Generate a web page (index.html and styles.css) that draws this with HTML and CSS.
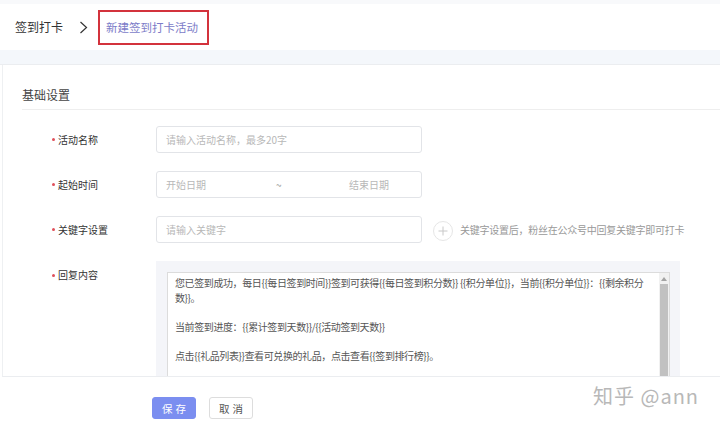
FILE: index.html
```html
<!DOCTYPE html>
<html lang="zh">
<head>
<meta charset="utf-8">
<link rel="stylesheet" href="styles.css">
</head>
<body>
<div class="page">
  <header class="header">
    <span class="crumb">签到打卡</span>
    <svg class="chev" width="9" height="13" viewBox="0 0 9 13"><path d="M1.5 1 L7.5 6.5 L1.5 12" fill="none" stroke="#333" stroke-width="1.2"/></svg>
    <span class="crumb-box"><span class="crumb-cur">新建签到打卡活动</span></span>
  </header>
  <div class="band"></div>
  <main class="card">
    <h2 class="section-title">基础设置</h2>
    <div class="form">
      <div class="row">
        <label class="label"><span class="req"></span>活动名称</label>
        <div class="input"><span class="ph">请输入活动名称，最多20字</span></div>
      </div>
      <div class="row">
        <label class="label"><span class="req"></span>起始时间</label>
        <div class="input date">
          <span class="ph d1">开始日期</span>
          <span class="ph tilde">~</span>
          <span class="ph d2">结束日期</span>
        </div>
      </div>
      <div class="row">
        <label class="label"><span class="req"></span>关键字设置</label>
        <div class="input"><span class="ph">请输入关键字</span></div>
        <span class="plus"><svg width="10" height="10" viewBox="0 0 10 10"><path d="M5 0.5V9.5M0.5 5H9.5" stroke="#c8c8c8" stroke-width="1"/></svg></span>
        <span class="help">关键字设置后，粉丝在公众号中回复关键字即可打卡</span>
      </div>
      <div class="row row-top">
        <label class="label"><span class="req"></span>回复内容</label>
        <div class="ta-outer">
          <div class="ta">
            <div class="ta-text">
              <p>您已签到成功，每日{{每日签到时间}}签到可获得{{每日签到积分数}} {{积分单位}}，当前{{积分单位}}：{{剩余积分数}}。</p>
              <p>当前签到进度：{{累计签到天数}}/{{活动签到天数}}</p>
              <p>点击{{礼品列表}}查看可兑换的礼品，点击查看{{签到排行榜}}。</p>
            </div>
            <div class="sb">
              <div class="sb-up"><svg width="6" height="4" viewBox="0 0 6 4"><path d="M0 4L3 0L6 4Z" fill="#a3a3a3"/></svg></div>
              <div class="sb-thumb"></div>
            </div>
          </div>
        </div>
      </div>
    </div>
  </main>
  <footer class="footer">
    <button class="btn primary">保存</button>
    <button class="btn">取消</button>
    <span class="wm">知乎 @ann</span>
  </footer>
</div>
</body>
</html>
```

FILE: styles.css
```css
* { box-sizing: border-box; }
html, body { margin: 0; padding: 0; }
body {
  width: 720px;
  height: 424px;
  overflow: hidden;
  background: #fff;
  font-family: "Noto Sans CJK SC", "Noto Sans", sans-serif;
  color: #333;
}
.page {
  display: flex;
  flex-direction: column;
  height: 424px;
}
.header {
  height: 50px;
  display: flex;
  align-items: center;
  padding-left: 15px;
  border-top: 4px solid #f8f9fb;
  background: #fff;
}
.crumb {
  font-size: 12px;
  color: #333;
  line-height: 16px;
}
.chev {
  margin-left: 16px;
  margin-right: 10px;
  display: block;
}
.crumb-box {
  width: 111px;
  height: 35px;
  border: 2px solid #d3323c;
  display: flex;
  align-items: center;
  padding-left: 6px;
}
.crumb-cur {
  font-size: 11.5px;
  color: #7c7cc8;
  line-height: 16px;
}
.band {
  height: 15px;
  background: #f4f7fb;
  border-bottom: 1px solid #ebedf0;
}
.card {
  flex: 1;
  overflow: hidden;
  margin-left: 2px;
  border-left: 1px solid #eef0f2;
  border-bottom: 1px solid #ebedf0;
  padding-left: 19px;
}
.section-title {
  margin: 0;
  font-size: 12px;
  font-weight: normal;
  color: #444;
  line-height: 16px;
  padding-top: 22px;
  padding-bottom: 6px;
  border-bottom: 1px solid #eeeeee;
}
.form {
  padding-top: 16px;
  padding-left: 30px;
}
.row {
  display: flex;
  align-items: center;
  height: 27px;
  margin-bottom: 18px;
}
.row-top {
  align-items: flex-start;
  height: auto;
}
.label {
  width: 104px;
  flex: none;
  display: flex;
  align-items: center;
  font-size: 10px;
  color: #333;
  line-height: 14px;
}
.row-top .label {
  padding-top: 7px;
}
.req {
  width: 3px;
  height: 3px;
  border-radius: 50%;
  background: #e0505a;
  margin-right: 3px;
  flex: none;
}
.input {
  width: 266px;
  height: 27px;
  border: 1px solid #e2e4e8;
  border-radius: 3px;
  display: flex;
  align-items: center;
  padding-left: 9px;
  flex: none;
}
.ph {
  font-size: 10px;
  color: #b8b8b8;
  line-height: 14px;
}
.date .d1 { width: 110px; }
.date .tilde { width: 73px; color: #999; }
.plus {
  width: 20px;
  height: 20px;
  border: 1px solid #e6e6e6;
  border-radius: 50%;
  display: flex;
  align-items: center;
  justify-content: center;
  margin-left: 11px;
  margin-top: 3px;
}
.help {
  font-size: 10px;
  color: #999;
  margin-left: 7px;
  line-height: 14px;
  letter-spacing: -0.25px;
}
.ta-outer {
  width: 524px;
  background: #f4f5f9;
  padding: 11px 10px 0 11px;
  flex: none;
}
.ta {
  display: flex;
  background: #fff;
  border: 1px solid #dcdcdc;
  height: 140px;
}
.ta-text {
  flex: 1;
  padding: 3px 6px 0 7px;
  font-size: 10px;
  line-height: 14.5px;
  color: #555;
  letter-spacing: -0.4px;
}
.ta-text p {
  margin: 0 0 14.5px 0;
}
.sb {
  width: 10px;
  flex: none;
  background: #f1f1f1;
  display: flex;
  flex-direction: column;
}
.sb-up {
  height: 11px;
  display: flex;
  align-items: center;
  justify-content: center;
}
.sb-thumb {
  flex: 1;
  background: #c1c1c1;
  margin: 0 1px;
}
.footer {
  height: 47px;
  flex: none;
  display: flex;
  align-items: center;
  padding-left: 152px;
  padding-top: 15px;
  position: relative;
}
.btn {
  height: 22px;
  width: 44px;
  border: 1px solid #dddddd;
  border-radius: 3px;
  background: #fff;
  font-family: "Noto Sans CJK SC", sans-serif;
  font-size: 10.5px;
  color: #555;
  letter-spacing: 3px;
  padding: 0 0 0 3px;
  margin-right: 13px;
}
.btn.primary {
  background: #7b8ef0;
  border-color: #7b8ef0;
  color: #fff;
}
.wm {
  position: absolute;
  left: 593px;
  top: 4px;
  font-family: "Noto Sans CJK SC", sans-serif;
  font-size: 20px;
  color: #b8b8b8;
  letter-spacing: 1px;
}
```
